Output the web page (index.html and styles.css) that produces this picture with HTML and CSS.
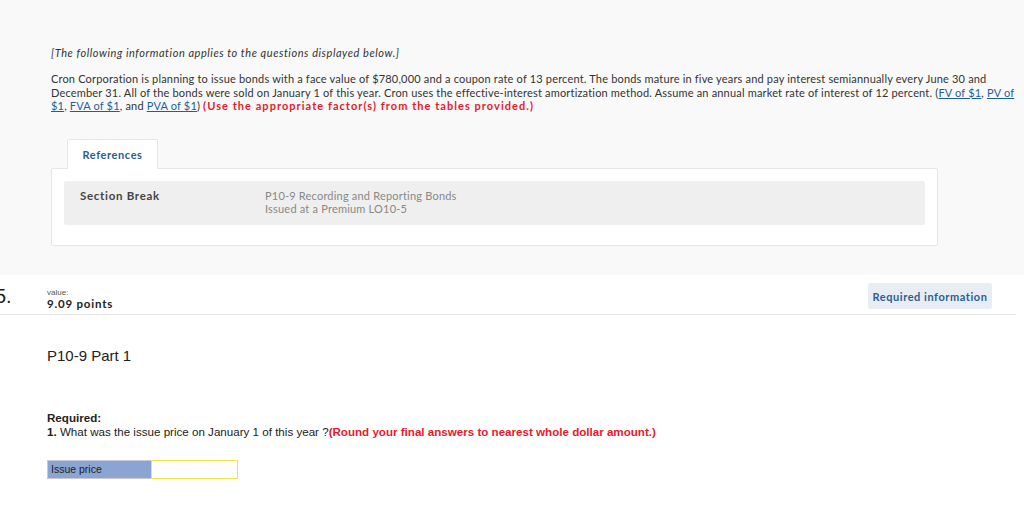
FILE: index.html
```html
<!DOCTYPE html>
<html>
<head>
<meta charset="utf-8">
<link rel="stylesheet" href="styles.css">
</head>
<body>
<section class="intro">
  <p class="note">[The following information applies to the questions displayed below.]</p>
  <p class="problem">Cron Corporation is planning to issue bonds with a face value of $780,000 and a coupon rate of 13 percent. The bonds mature in five years and pay interest semiannually every June 30 and December 31. All of the bonds were sold on January 1 of this year. Cron uses the effective-interest amortization method. Assume an annual market rate of interest of 12 percent. (<a href="#">FV of $1</a>, <a href="#">PV of $1</a>, <a href="#">FVA of $1</a>, and <a href="#">PVA of $1</a>) <span class="warn">(Use the appropriate factor(s) from the tables provided.)</span></p>
  <div class="refs">
    <div class="tab">References</div>
    <div class="refbox">
      <div class="refrow">
        <div class="reflabel">Section Break</div>
        <div class="refdesc">P10-9 Recording and Reporting Bonds<br>Issued at a Premium LO10-5</div>
      </div>
    </div>
  </div>
</section>
<section class="question">
  <div class="qhead">
    <div class="qnum">5.</div>
    <div class="qval">
      <div class="vlabel">value:</div>
      <div class="points">9.09 points</div>
    </div>
    <button class="reqinfo">Required information</button>
  </div>
  <h2 class="part">P10-9 Part 1</h2>
  <div class="required">
    <div class="rtitle">Required:</div>
    <div class="rtext"><b>1.</b> What was the issue price on January 1 of this year ?<span class="rwarn">(Round your final answers to nearest whole dollar amount.)</span></div>
  </div>
  <div class="answer">
    <div class="alabel">Issue price</div>
    <div class="ainput"></div>
  </div>
</section>
</body>
</html>
```
FILE: styles.css
```css
html, body { margin: 0; padding: 0; background: #fff; }
body { font-family: Lato, "Open Sans", sans-serif; color: #333; overflow: hidden; }
.intro { background: #f9f9f9; height: 275px; padding: 46px 0 0 51px; box-sizing: border-box; }
.note { margin: 0; font-style: italic; font-size: 11px; line-height: 14px; color: #333; letter-spacing: 0.55px; }
.problem { margin: 12px 3px 0 0; font-size: 11px; line-height: 13.5px; color: #333; letter-spacing: 0.18px; }
.problem a { color: #1f5e9e; text-decoration: underline; }
.warn { color: #e8192c; font-weight: 700; letter-spacing: 1.05px; }
.refs { width: 887px; margin-top: 25px; }
.tab { display: inline-block; margin-left: 16px; width: 91px; height: 30px; box-sizing: border-box; background: #fff; border: 1px solid #e6e6e6; border-bottom: none; border-radius: 2px 2px 0 0; color: #2a5d96; font-weight: 700; font-size: 11px; line-height: 29px; text-align: center; letter-spacing: 0.6px; position: relative; top: 1px; }
.refbox { background: #fff; border: 1px solid #e6e6e6; border-radius: 2px; padding: 12px 12px 20px; height: 78px; box-sizing: border-box; }
.refrow { background: #efefef; border-radius: 2px; height: 44px; display: flex; padding: 8px 16px 0; box-sizing: border-box; }
.reflabel { width: 185px; font-size: 11.5px; font-weight: 700; color: #444; letter-spacing: 0.7px; line-height: 13px; }
.refdesc { font-size: 11px; color: #888; line-height: 13px; letter-spacing: 0.2px; }
.question { position: relative; }
.qhead { display: flex; align-items: flex-start; height: 39px; border-bottom: 1px solid #e5e5e5; margin-right: 8px; }
.qnum { width: 52px; margin-left: -5px; font-size: 20px; line-height: 20px; padding-top: 11px; color: #222; font-family: "Liberation Sans", Arial, sans-serif; }
.qval { padding-top: 13px; flex: 1; }
.vlabel { font-size: 8px; line-height: 9px; color: #555; font-family: "Liberation Sans", Arial, sans-serif; }
.points { font-size: 11.5px; font-weight: 700; color: #222; letter-spacing: 0.8px; line-height: 14px; }
.reqinfo { margin-top: 8px; margin-right: 24px; height: 26px; padding: 0 4px; width: 124px; border: none; border-radius: 2px; background: #e8edf3; color: #2a5d96; font-family: Lato, sans-serif; font-weight: 700; font-size: 11px; letter-spacing: 0.55px; }
.part { margin: 33px 0 0 47px; font-family: "Liberation Sans", Arial, sans-serif; font-weight: 400; font-size: 15px; line-height: 16px; color: #222; }
.required { margin: 47px 0 0 47px; font-family: "Liberation Sans", Arial, sans-serif; font-size: 11.6px; line-height: 14px; color: #222; }
.rtitle { font-weight: 700; }
.rwarn { color: #e8192c; font-weight: 700; }
.answer { display: flex; margin: 21px 0 0 47px; height: 19px; }
.alabel { width: 104px; background: #8aa5d2; border: 1px solid #c8c8d8; border-right: none; box-sizing: border-box; font-family: "Liberation Sans", Arial, sans-serif; font-size: 10.5px; line-height: 17px; padding-left: 3px; color: #222; }
.ainput { width: 87px; background: #fff; border: 1px solid #efe74a; box-sizing: border-box; }
```
